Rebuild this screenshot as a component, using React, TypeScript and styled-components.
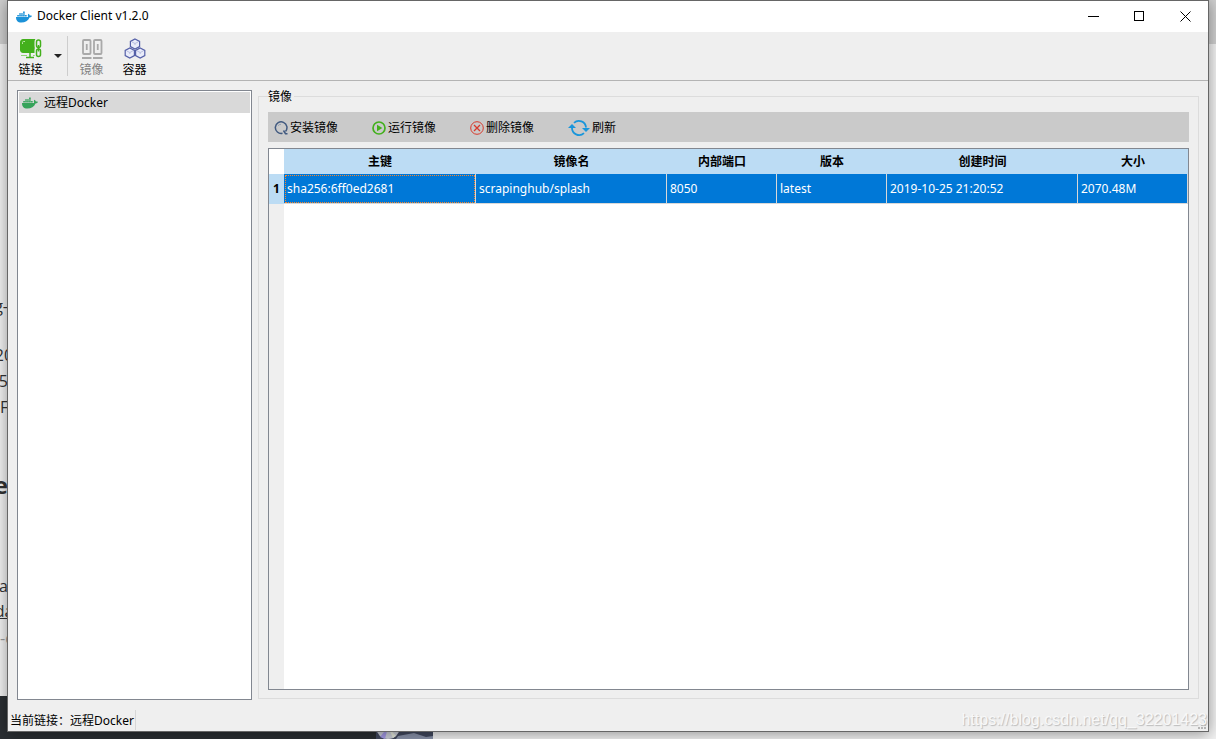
import React from "react";
import styled, { createGlobalStyle } from "styled-components";
import { FaDocker } from "react-icons/fa";

const GlobalStyle = createGlobalStyle`
  * { box-sizing: border-box; }
  body {
    margin: 0;
    font-family: "Noto Sans", "Noto Sans CJK SC", sans-serif;
    font-size: 12px;
    line-height: 16px;
    color: #000;
  }
  button { font: inherit; color: inherit; border: 0; background: none; padding: 0; }
`;

const Desktop = styled.div`
  position: relative;
  display: flex;
  flex-direction: column;
  min-height: 100vh;
  padding: 0 7px 7px;
  overflow: hidden;
  background: linear-gradient(#cfcfcf 44px, #f2f2f2 44px);
`;

const DarkPanel = styled.div`
  position: absolute;
  left: 0;
  bottom: 0;
  width: 433px;
  height: 43px;
  background: #2b2f33;
`;

const Disc = styled.svg`
  position: absolute;
  right: 0;
  bottom: 0;
`;

const PageText = styled.div<{
  $top: number;
  $align?: "flex-start" | "center" | "flex-end";
  $size?: number;
  $bold?: boolean;
  $underline?: boolean;
  $color?: string;
}>`
  position: absolute;
  left: 0;
  top: ${(p) => p.$top}px;
  width: 8px;
  display: flex;
  justify-content: ${(p) => p.$align ?? "flex-end"};
  overflow: hidden;
  white-space: nowrap;
  font-family: "Open Sans", sans-serif;
  font-size: ${(p) => p.$size ?? 16}px;
  line-height: 24px;
  font-weight: ${(p) => (p.$bold ? 700 : 400)};
  text-decoration: ${(p) => (p.$underline ? "underline" : "none")};
  color: ${(p) => p.$color ?? "#333"};
`;

const Window = styled.div`
  position: relative;
  flex: 1;
  display: flex;
  flex-direction: column;
  border: 1px solid #666;
  background: #efefef;
  box-shadow: 0 2px 14px rgba(0, 0, 0, 0.4);
`;

const TitleBar = styled.header`
  display: flex;
  align-items: center;
  height: 31px;
  padding-left: 8px;
  background: #fff;
`;

const Title = styled.h1`
  flex: 1;
  margin: 0 0 0 5px;
  padding-bottom: 2px;
  font-size: 12px;
  font-weight: 400;
`;

const CaptionButton = styled.button`
  display: flex;
  align-items: center;
  justify-content: center;
  width: 46px;
  height: 30px;
`;

const MainToolbar = styled.nav`
  display: flex;
  align-items: center;
  height: 49px;
  padding-left: 1px;
  border-bottom: 1px solid #b4b4b4;
`;

const ToolButton = styled.button`
  display: flex;
  flex-direction: column;
  align-items: center;
  gap: 2px;
  width: 43px;
  padding-top: 4px;
  &:disabled { color: #838383; }
`;

const MenuButton = styled.button`
  display: flex;
  align-items: center;
  justify-content: center;
  width: 12px;
  height: 40px;
`;

const Separator = styled.span`
  width: 1px;
  height: 40px;
  margin: 0 2px 0 3px;
  background: #cdcdcd;
`;

const Main = styled.main`
  flex: 1;
  display: flex;
  gap: 6px;
  padding: 9px 9px 9px;
`;

const Tree = styled.ul`
  flex: none;
  width: 235px;
  margin: 0;
  padding: 1px;
  list-style: none;
  border: 1px solid #828790;
  background: #fff;
`;

const TreeItem = styled.li`
  display: flex;
  align-items: center;
  gap: 6px;
  height: 21px;
  padding-left: 3px;
  background: #d9d9d9;
`;

const GroupBox = styled.fieldset`
  flex: 1;
  display: flex;
  flex-direction: column;
  gap: 6px;
  min-width: 0;
  margin: 0 0 1px;
  padding: 9px 9px 8px;
  border: 1px solid #dcdcdc;
`;

const GroupTitle = styled.legend`
  padding: 0 2px 0 0;
  line-height: 13px;
`;

const ActionBar = styled.div`
  display: flex;
  align-items: center;
  gap: 34px;
  height: 30px;
  padding: 1px 0 0 6px;
  background: #cacaca;
`;

const ActionButton = styled.button`
  display: flex;
  align-items: center;
  gap: 2px;
`;

const TableFrame = styled.div`
  flex: 1;
  border: 1px solid #828790;
  background: linear-gradient(to right, #efefef 15px, #fff 15px);
`;

const Table = styled.table`
  width: 100%;
  table-layout: fixed;
  border-collapse: separate;
  border-spacing: 0;
`;

const Col = styled.col<{ $width?: number }>`
  width: ${(p) => (p.$width ? `${p.$width}px` : "auto")};
`;

const Corner = styled.td`
  padding: 0;
  background: #fff;
`;

const HeadCell = styled.th`
  height: 25px;
  padding: 0;
  background: #bcdcf4;
  font-weight: 700;
  text-align: center;
`;

const RowHead = styled.th`
  padding: 0;
  background: #bcdcf4;
  font-weight: 700;
`;

const Cell = styled.td<{ $focused?: boolean }>`
  height: 30px;
  padding: 0 3px;
  border-right: 1px solid #d8d8d8;
  border-bottom: 1px solid #d8d8d8;
  background: #0078d7;
  color: #fff;
  outline: ${(p) => (p.$focused ? "1px dotted #ff8728" : "none")};
  outline-offset: -2px;
`;

const StatusBar = styled.footer`
  display: flex;
  align-items: center;
  justify-content: space-between;
  height: 22px;
`;

const StatusText = styled.span`
  padding: 3px 1px 1px 2px;
  border-right: 1px solid #d7d7d7;
`;

const Grip = styled.svg`
  align-self: flex-end;
  margin: 0 2px 2px 0;
`;

const Watermark = styled.div`
  position: absolute;
  right: 9px;
  bottom: 8px;
  font-family: "Liberation Sans", sans-serif;
  font-size: 16px;
  line-height: 22px;
  color: #f8f8f8;
  text-shadow: 1px 1px 1px #bbb;
`;

const ConnectIcon = () => (
  <svg width="24" height="22" viewBox="0 0 24 22" fill="none">
    <rect x="1.5" y="1.5" width="17" height="13" rx="2.5" fill="#43b01c" stroke="#43b01c" />
    <path d="M3.5 6V4.500Q3.500 3.500 4.500 3.500H6" stroke="#b9e7a8" />
    <path d="M11 15v4M7 19.500h8" stroke="#43b01c" strokeWidth="1.500" />
    <path d="M2 17.500h6M14 17.500h4" stroke="#8fd477" />
    <g stroke="#efefef" strokeWidth="4">
      <rect x="17.500" y="2" width="4" height="8" rx="2" />
      <rect x="17.500" y="10" width="4" height="8" rx="2" />
    </g>
    <g stroke="#43b01c" strokeWidth="1.500">
      <rect x="17.500" y="2" width="4" height="7.500" rx="2" />
      <rect x="17.500" y="11" width="4" height="7.500" rx="2" />
      <path d="M19.500 7v6.500" />
    </g>
  </svg>
);

const ImagesIcon = () => (
  <svg width="22" height="22" viewBox="0 0 22 22" fill="none" stroke="#a9a9a9" strokeWidth="1.800">
    <rect x="2" y="2" width="7.500" height="14" rx="1" />
    <rect x="13" y="2" width="7.500" height="14" rx="1" />
    <path d="M5.750 6v6M16.750 6v6" />
    <path d="M1 20h9.500M12 20h9.500" />
  </svg>
);

const Cube = ({ x, y }: { x: number; y: number }) => (
  <g transform={`translate(${x} ${y})`}>
    <path d="M0-5L4.600-2.600V2.600L0 5L-4.600 2.600V-2.600Z" />
    <path d="M-3-2L0-.5L3-2M0-.5V1" strokeWidth=".8" opacity=".4" />
  </g>
);

const ContainersIcon = () => (
  <svg width="22" height="22" viewBox="0 0 22 22" fill="#e9ecfa" stroke="#5560a8" strokeWidth="1.200">
    <Cube x={11} y={6} />
    <Cube x={5.8} y={15} />
    <Cube x={16.2} y={15} />
  </svg>
);

const InstallIcon = () => (
  <svg width="14" height="14" viewBox="0 0 14 14" fill="none" stroke="#415a80" strokeWidth="1.500">
    <path d="M8.500 12.300A5.800 5.800 0 1 1 11.500 10.500" />
    <path d="M9.500 9.500L11.500 12.700H13.500" />
    <path d="M4 4.800Q5 3.300 7 3.300" stroke="#8796ad" strokeWidth=".8" />
  </svg>
);

const RunIcon = () => (
  <svg width="14" height="14" viewBox="0 0 14 14">
    <circle cx="7" cy="7" r="6" fill="none" stroke="#43b01c" strokeWidth="1.700" />
    <path d="M5 3.800L10.300 7L5 10.200Z" fill="#43b01c" />
  </svg>
);

const DeleteIcon = () => (
  <svg width="14" height="14" viewBox="0 0 14 14" fill="none" stroke="#d8392b">
    <circle cx="7" cy="7" r="6.300" />
    <path d="M4 4L10 10M10 4L4 10" strokeWidth="1.300" />
  </svg>
);

const RefreshIcon = () => (
  <svg width="22" height="18" viewBox="0 0 22 18">
    <g fill="none" stroke="#1996db" strokeWidth="1.800">
      <path d="M6 3.800A7.200 7.200 0 0 1 18 8.500" />
      <path d="M16 14.200A7.200 7.200 0 0 1 4 8.500" />
    </g>
    <path d="M0 9L4 5L8 9Z" fill="#1996db" />
    <path d="M14 9H22L18 13Z" fill="#1996db" />
  </svg>
);

const columns = [
  { label: "主键", width: 192 },
  { label: "镜像名", width: 191 },
  { label: "内部端口", width: 110 },
  { label: "版本", width: 110 },
  { label: "创建时间", width: 191 },
  { label: "大小" },
];

const images = [["sha256:6ff0ed2681", "scrapinghub/splash", "8050", "latest", "2019-10-25 21:20:52", "2070.48M"]];

export default function App() {
  return (
    <Desktop>
      <GlobalStyle />
      <DarkPanel>
        <Disc width="57" height="10" viewBox="0 0 57 10">
          <rect width="57" height="10" fill="#42495f" />
          <path d="M22 7L38 4L50 8L57 7V10H20Z" fill="#8a93ab" />
          <circle cx="12" cy="-2" r="12" fill="#cdd0da" />
          <path d="M12-2L4 8L9 10Z" fill="#a59be8" />
          <path d="M12-2L20 7L17 9Z" fill="#e8ecdf" />
        </Disc>
      </DarkPanel>
      <PageText $top={294}>g-</PageText>
      <PageText $top={343} $align="center">20</PageText>
      <PageText $top={369}>5</PageText>
      <PageText $top={395} $align="center">F</PageText>
      <PageText $top={473} $size={24} $bold>e</PageText>
      <PageText $top={574}>a</PageText>
      <PageText $top={599} $align="center" $underline>da</PageText>
      <PageText $top={626} $align="flex-start" $color="#999">-c</PageText>

      <Window>
        <TitleBar>
          <FaDocker size={16} color="#1c92d8" />
          <Title>Docker Client v1.2.0</Title>
          <CaptionButton aria-label="Minimize">
            <svg width="11" height="11" stroke="#000"><path d="M0 5.500H11" /></svg>
          </CaptionButton>
          <CaptionButton aria-label="Maximize">
            <svg width="11" height="11" fill="none" stroke="#000"><rect x=".5" y=".5" width="9" height="9" /></svg>
          </CaptionButton>
          <CaptionButton aria-label="Close">
            <svg width="11" height="11" stroke="#000"><path d="M.5 .5L10.500 10.500M10.500 .5L.5 10.500" /></svg>
          </CaptionButton>
        </TitleBar>

        <MainToolbar>
          <ToolButton><ConnectIcon />链接</ToolButton>
          <MenuButton aria-label="链接菜单">
            <svg width="8" height="4" viewBox="0 0 8 4"><path d="M0 0H8L4 4Z" fill="#222" /></svg>
          </MenuButton>
          <Separator />
          <ToolButton disabled><ImagesIcon />镜像</ToolButton>
          <ToolButton><ContainersIcon />容器</ToolButton>
        </MainToolbar>

        <Main>
          <Tree>
            <TreeItem><FaDocker size={16} color="#36a35a" />远程Docker</TreeItem>
          </Tree>
          <GroupBox>
            <GroupTitle>镜像</GroupTitle>
            <ActionBar>
              <ActionButton><InstallIcon />安装镜像</ActionButton>
              <ActionButton><RunIcon />运行镜像</ActionButton>
              <ActionButton><DeleteIcon />删除镜像</ActionButton>
              <ActionButton><RefreshIcon />刷新</ActionButton>
            </ActionBar>
            <TableFrame>
              <Table>
                <colgroup>
                  <Col $width={15} />
                  {columns.map((c) => <Col key={c.label} $width={c.width} />)}
                </colgroup>
                <thead>
                  <tr>
                    <Corner />
                    {columns.map((c) => <HeadCell key={c.label} scope="col">{c.label}</HeadCell>)}
                  </tr>
                </thead>
                <tbody>
                  {images.map((row, r) => (
                    <tr key={row[0]}>
                      <RowHead scope="row">{r + 1}</RowHead>
                      {row.map((value, c) => <Cell key={c} $focused={r === 0 && c === 0}>{value}</Cell>)}
                    </tr>
                  ))}
                </tbody>
              </Table>
            </TableFrame>
          </GroupBox>
        </Main>

        <StatusBar>
          <StatusText>当前链接：远程Docker</StatusText>
          <Grip width="8" height="8" fill="#b5b5b5">
            <path d="M6 0h2v2h-2zM3 3h2v2h-2zM6 3h2v2h-2zM0 6h2v2h-2zM3 6h2v2h-2zM6 6h2v2h-2z" />
          </Grip>
        </StatusBar>
      </Window>
      <Watermark>https://blog.csdn.net/qq_32201423</Watermark>
    </Desktop>
  );
}
